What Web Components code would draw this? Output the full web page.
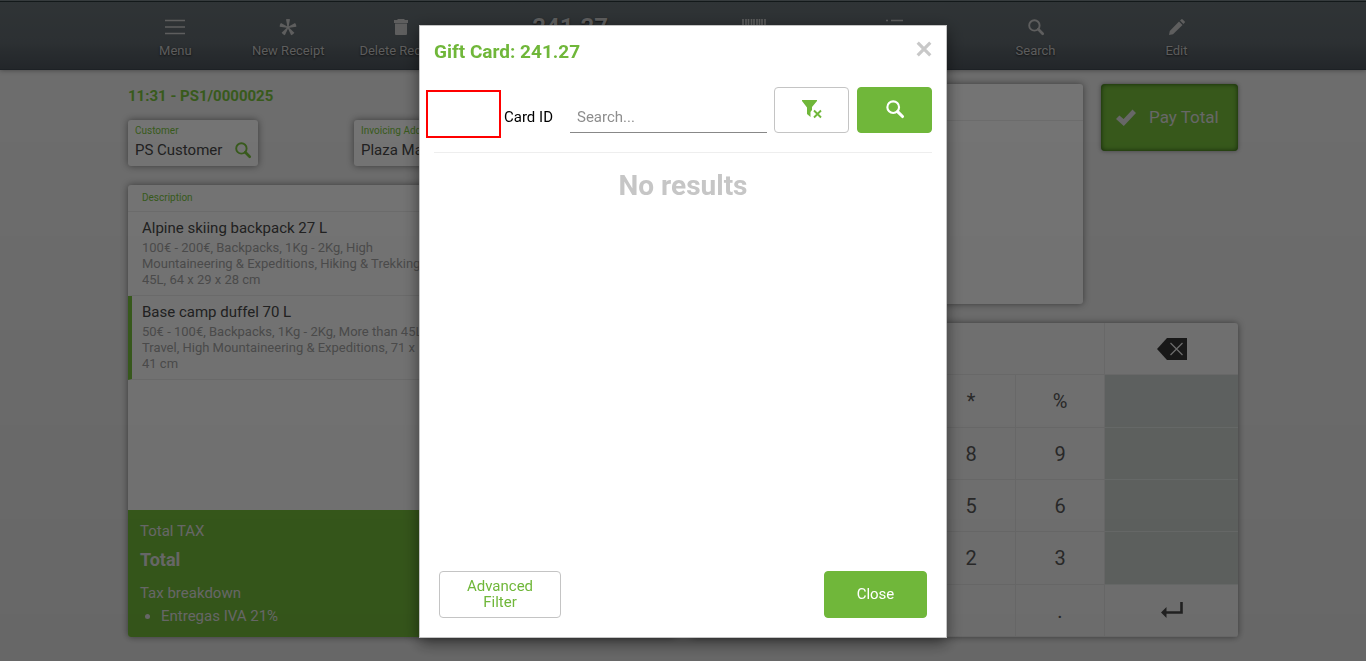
<!DOCTYPE html>
<html lang="en">
<head>
<meta charset="utf-8">
<meta name="viewport" content="width=device-width, initial-scale=1">
<title>Gift Card</title>
<style>
body { margin: 0; font-family: Roboto, "Liberation Sans", sans-serif; font-size: 15px; line-height: 16px; color: #444; }
</style>
</head>
<body>
<pos-app></pos-app>
<gift-dialog heading="Gift Card: 241.27"></gift-dialog>

<script>
const define = (name, html, setup) => {
  const template = document.createElement('template');
  template.innerHTML = '<style>*{box-sizing:border-box}button,input{font:inherit}:host{display:block;box-sizing:border-box}</style>' + html;
  customElements.define(name, class extends HTMLElement {
    connectedCallback() {
      if (this.shadowRoot) return;
      this.attachShadow({ mode: 'open' }).append(template.content.cloneNode(true));
      if (setup) setup(this, this.shadowRoot);
    }
  });
};

const petal = 'M6 .3Q8-.5 10 .3L8.700 7.500H7.300z';
const icons = {
  menu: ['0 0 20 16', '<path d="M0 1.5h20M0 8h20M0 14.5h20" fill="none" stroke="currentColor" stroke-width="1.4"/>'],
  star: ['0 0 16 16', '<g fill="currentColor">' + [0, 72, 144, 216, 288].map(a => `<path d="${petal}" transform="rotate(${a} 8 8.4)"/>`).join('') + '<circle cx="8" cy="8.4" r="1.3"/></g>'],
  trash: ['0 0 14 16', '<path d="M4 0h6l1 1h3v3H0V1h3zM1 4.6h12V15q0 1-1 1H2q-1 0-1-1z" fill="currentColor"/>'],
  barcode: ['0 0 24 16', '<path d="M1 0v16M4 0v16M6.500 0v16M9.500 0v16M12 0v16M15 0v16M17.500 0v16M20 0v16M23 0v16" fill="none" stroke="currentColor" stroke-width="1.600"/>'],
  list: ['0 0 17 16', '<path d="M0 1.500h2M5 1.500h12M0 8h2M5 8h12M0 14.500h2M5 14.500h12" fill="none" stroke="currentColor" stroke-width="1.5"/>'],
  search: ['0 0 16 16', '<circle cx="6.400" cy="6.400" r="5.200" fill="none" stroke="currentColor" stroke-width="1.900"/><path d="M10.300 10.300l4.400 4.400" stroke="currentColor" stroke-width="2.700" stroke-linecap="round"/>'],
  edit: ['0 0 16 16', '<path d="M0 16l.8-4L10 2.500l3.500 3.500-9.500 9.200zM11 1.600L12.500.200q.4-.4.900 0l2.400 2.400q.4.500 0 .9L14.400 5z" fill="currentColor"/>'],
  check: ['0 0 20 17', '<path d="M0 10l3.400-3.600L7.600 10 16.500.500 20 4 7.800 17z" fill="currentColor"/>'],
  back: ['0 0 30 22', '<path d="M0 11L10 0h20v22H10z" fill="#333"/><path d="M13.500 5l12 12M25.500 5l-12 12" stroke="#ddd" stroke-width="1.300"/>'],
  enter: ['0 0 22 16', '<path d="M20.500 0v10.500H4" fill="none" stroke="#444" stroke-width="2.600"/><path d="M0 10.500L5.500 5v11z" fill="#444"/>'],
  close: ['0 0 16 16', '<path d="M1.700 1.700l12.600 12.600M14.300 1.700L1.700 14.300" stroke="currentColor" stroke-width="3.200"/>'],
  filter: ['0 0 20 18', '<path d="M0 0h15v1L10 7v3L8.500 12v5L5 14V7.500L0 1z" fill="currentColor"/><path d="M12 10.500l7 7M19 10.500l-7 7" stroke="#fff" stroke-width="4"/><path d="M12 10.500l7 7M19 10.500l-7 7" stroke="currentColor" stroke-width="1.900"/>']
};

define('app-icon', `<style>:host{display:inline-block;line-height:0;flex:none}svg{display:block;overflow:visible}</style><svg aria-hidden="true"></svg>`, (el, root) => {
  const [box, shape] = icons[el.getAttribute('name')];
  const svg = root.querySelector('svg');
  const [, , w, h] = box.split(' ');
  svg.setAttribute('viewBox', box);
  svg.setAttribute('width', el.getAttribute('width') || w);
  svg.setAttribute('height', el.getAttribute('height') || h);
  svg.innerHTML = shape;
});

define('nav-item', `<style>
  button{display:flex;flex-direction:column;align-items:center;gap:9px;width:100%;padding:0;border:0;background:none;color:inherit;font-size:13px;line-height:14px;white-space:nowrap;text-shadow:0 1px 2px #222;cursor:pointer}
</style><button type="button"><slot></slot></button>`, (el, root) => {
  const icon = document.createElement('app-icon');
  icon.setAttribute('name', el.getAttribute('icon'));
  root.querySelector('button').prepend(icon);
  if (el.hasAttribute('label')) root.querySelector('button').setAttribute('aria-label', el.getAttribute('label'));
});

define('pos-header', `<style>
  :host{height:70px;background:linear-gradient(#5f686c,#596166 60%,#474e55);border-top:1px solid #6d777a;border-bottom:1px solid #3c444c;box-shadow:inset 0 1px #273234,0 0 5px #0006;color:#bcbcbc}
  nav{display:grid;grid-template-columns:1fr 1fr;max-width:1128px;margin:0 auto;padding-top:18px}
  .left{display:grid;grid-template-columns:1fr 1fr 1fr 2fr}
  .right{display:grid;grid-template-columns:repeat(4,1fr)}
  strong{text-align:center;font-size:24px;line-height:16px;text-shadow:0 1px 2px #222}
</style><nav><div class="left">
  <nav-item icon="menu">Menu</nav-item><nav-item icon="star">New Receipt</nav-item><nav-item icon="trash">Delete Receipt</nav-item><strong>241.27</strong>
</div><div class="right">
  <nav-item icon="barcode" label="Scan"></nav-item><nav-item icon="list" label="List"></nav-item><nav-item icon="search">Search</nav-item><nav-item icon="edit">Edit</nav-item>
</div></nav>`);

define('field-card', `<style>
  :host{width:130px;height:46px;padding:4px 7px 0;background:#ebebeb;border-radius:3px;box-shadow:0 0 7px #0007;overflow:hidden;white-space:nowrap}
  .label{font-size:10px;line-height:14px;color:#72b73a}
  .value{display:flex;justify-content:space-between;align-items:center;line-height:24px}
  app-icon{color:#72b73a}
</style><div class="label"></div><div class="value"><slot></slot></div>`, (el, root) => {
  root.querySelector('.label').textContent = el.getAttribute('label');
  if (el.hasAttribute('searchable')) {
    const icon = document.createElement('app-icon');
    icon.setAttribute('name', 'search');
    root.querySelector('.value').append(icon);
  }
});

define('order-line', `<style>
  :host{padding:7px 10px 7px 10px;border-left:4px solid transparent;border-bottom:1px solid #dadada}
  :host([selected]){border-left-color:#72b73a}
  h3{margin:0 0 3px;font-size:15px;line-height:18px;font-weight:400}
  p{margin:0;max-width:290px;font-size:13px;line-height:16px;color:#999}
</style><h3></h3><p><slot></slot></p>`, (el, root) => { root.querySelector('h3').textContent = el.getAttribute('name'); });

define('order-panel', `<style>
  :host{display:flex;flex-direction:column}
  h2{margin:0;padding:2px 0 13px;font-size:15px;line-height:21px;color:#72b73a}
  .fields{display:flex;gap:96px;margin-bottom:19px}
  .order{flex:1;display:flex;flex-direction:column;background:#ebebeb;border-radius:3px;box-shadow:0 0 7px #0007;overflow:hidden}
  .head{padding:6px 14px;border-bottom:1px solid #dadada;font-size:10px;line-height:14px;color:#72b73a}
  .totals{margin-top:auto;padding:12px;background:#6fb338;color:#d8d8d8;line-height:18px}
  .totals strong{display:block;margin:10px 0 14px;font-size:18px;line-height:20px}
  ul{margin:5px 0 0;padding-left:21px}
</style>
<h2>11:31 - PS1/0000025</h2>
<div class="fields"><field-card label="Customer" searchable>PS Customer</field-card><field-card label="Invoicing Address">Plaza Mayor</field-card></div>
<section class="order">
  <div class="head">Description</div>
  <order-line name="Alpine skiing backpack 27 L">100€ - 200€, Backpacks, 1Kg - 2Kg, High Mountaineering &amp; Expeditions, Hiking &amp; Trekking, 45L, 64 x 29 x 28 cm</order-line>
  <order-line name="Base camp duffel 70 L" selected>50€ - 100€, Backpacks, 1Kg - 2Kg, More than 45L, Travel, High Mountaineering &amp; Expeditions, 71 x 41&nbsp;cm</order-line>
  <div class="totals">Total TAX<strong>Total</strong>Tax breakdown<ul><li>Entregas IVA 21%</li></ul></div>
</section>`);

define('pay-button', `<style>
  button{display:flex;align-items:center;gap:13px;width:100%;height:67px;padding:0 15px 1px;border:0;border-radius:4px;background:#6fb338;box-shadow:inset 0 0 5px #264d10,0 0 4px #0006;color:#d0d0d0;font-size:17px;white-space:nowrap;cursor:pointer}
</style><button type="button"><app-icon name="check"></app-icon><slot></slot></button>`);

define('key-pad', `<style>
  :host{display:grid;grid-template-columns:1fr repeat(3,89px) 133px;grid-auto-rows:1fr;background:#e6e6e6;border-radius:3px;box-shadow:0 0 7px #0007;overflow:hidden}
  button,.display{min-width:0;padding:1px 0 0;border:0;border-right:1px solid #d8d8d8;border-bottom:1px solid #d8d8d8;background:none;color:#555;font-size:20px}
  .display{grid-column:span 4}
  .side{background:#c2c8c5;border-color:#d4d9d7}
  .last{border-right:0}
</style><div class="display"></div><button class="last" aria-label="Backspace"><app-icon name="back"></app-icon></button>`, (el, root) => {
  [['*', '%'], ['8', '9'], ['5', '6'], ['2', '3'], ['', '.']].forEach((row, index) => {
    ['', '', ...row, ''].forEach((key, column) => {
      const button = document.createElement('button');
      button.type = 'button';
      button.textContent = key;
      if (column === 4) {
        button.className = index < 4 ? 'side last' : 'last';
        if (index < 4) button.disabled = true;
        else { button.setAttribute('aria-label', 'Enter'); button.innerHTML = '<app-icon name="enter"></app-icon>'; }
      }
      root.append(button);
    });
  });
});

define('pos-app', `<style>
  :host{display:flex;flex-direction:column;min-height:100vh;background:#dcdcdc}
  main{flex:1;display:grid;grid-template-columns:1fr 1fr;gap:18px;width:100%;max-width:1128px;margin:0 auto;padding:14px 9px 24px}
  .work{display:grid;grid-template-rows:7fr 10fr;gap:19px}
  .top{display:grid;grid-template-columns:1fr 137px;gap:18px}
  .lines{background:#ebebeb;border-radius:3px;box-shadow:0 0 7px #0007}
  .lines div{height:37px;border-bottom:1px solid #dadada}
</style><pos-header></pos-header><main><order-panel></order-panel><div class="work"><div class="top"><div class="lines"><div></div></div><pay-button>Pay Total</pay-button></div><key-pad></key-pad></div></main>`);

define('action-button', `<style>
  :host{flex:none}
  button{display:flex;align-items:center;justify-content:center;width:100%;height:100%;padding:0 24px 2px;border:1px solid #c4c4c4;border-radius:4px;background:#fff;color:#70b73a;font-size:15px;line-height:16px;cursor:pointer}
  :host([primary]) button{border-color:#70b73a;background:#70b73a;color:#fff}
</style><button type="button"><slot></slot></button>`, (el, root) => {
  if (el.hasAttribute('label')) root.querySelector('button').setAttribute('aria-label', el.getAttribute('label'));
});

define('gift-dialog', `<style>
  :host{position:fixed;inset:0;display:flex;justify-content:center;padding:25px 0 23px;background:linear-gradient(#00000080,#00000087)}
  section{display:flex;flex-direction:column;width:528px;max-width:100%;background:#fff;border:1px solid #c4c4c4;box-shadow:0 5px 15px #00000080}
  header{display:flex;justify-content:space-between;align-items:flex-start;padding:15px 14px 0}
  h1{margin:0;font-size:19px;line-height:22px;color:#70b73a}
  .x{display:flex;padding:0;border:0;background:none;color:#c8c8c8;cursor:pointer}
  form{display:flex;align-items:flex-start;padding:24px 14px 0 6px}
  .mark{width:75px;height:48px;margin:3px 3px 0 0;border:2px solid #f00;flex:none}
  label{margin:21px 17px 0 0;color:#000;line-height:18px;white-space:nowrap}
  input{flex:1;min-width:0;height:46px;margin-right:7px;padding:15px 7px 0;border:0;border-bottom:1px solid #888;outline:0;background:none;color:#333}
  input::placeholder{color:#8e8e8e;opacity:1}
  form action-button{width:75px;height:46px}
  form action-button + action-button{margin-left:8px}
  .results{flex:1;margin:14px 14px 0;border-top:1px solid #eee;padding-top:17px;text-align:center;font-size:28px;line-height:32px;font-weight:700;color:#c6c6c6}
  footer{display:flex;justify-content:space-between;padding:0 19px 19px}
  footer action-button{height:47px;width:122px}
  footer action-button[primary]{width:103px}
</style><section role="dialog" aria-labelledby="title">
<header><h1 id="title"></h1><button class="x" type="button" aria-label="Dismiss"><app-icon name="close"></app-icon></button></header>
<form><div class="mark"></div><label for="card">Card ID</label><input id="card" type="text" placeholder="Search..."><action-button label="Clear filter"><app-icon name="filter"></app-icon></action-button><action-button primary label="Search"><app-icon name="search" width="18" height="18"></app-icon></action-button></form>
<div class="results">No results</div>
<footer><action-button>Advanced Filter</action-button><action-button primary>Close</action-button></footer>
</section>`, (el, root) => { root.querySelector('h1').textContent = el.getAttribute('heading'); });
</script>
</body>
</html>
